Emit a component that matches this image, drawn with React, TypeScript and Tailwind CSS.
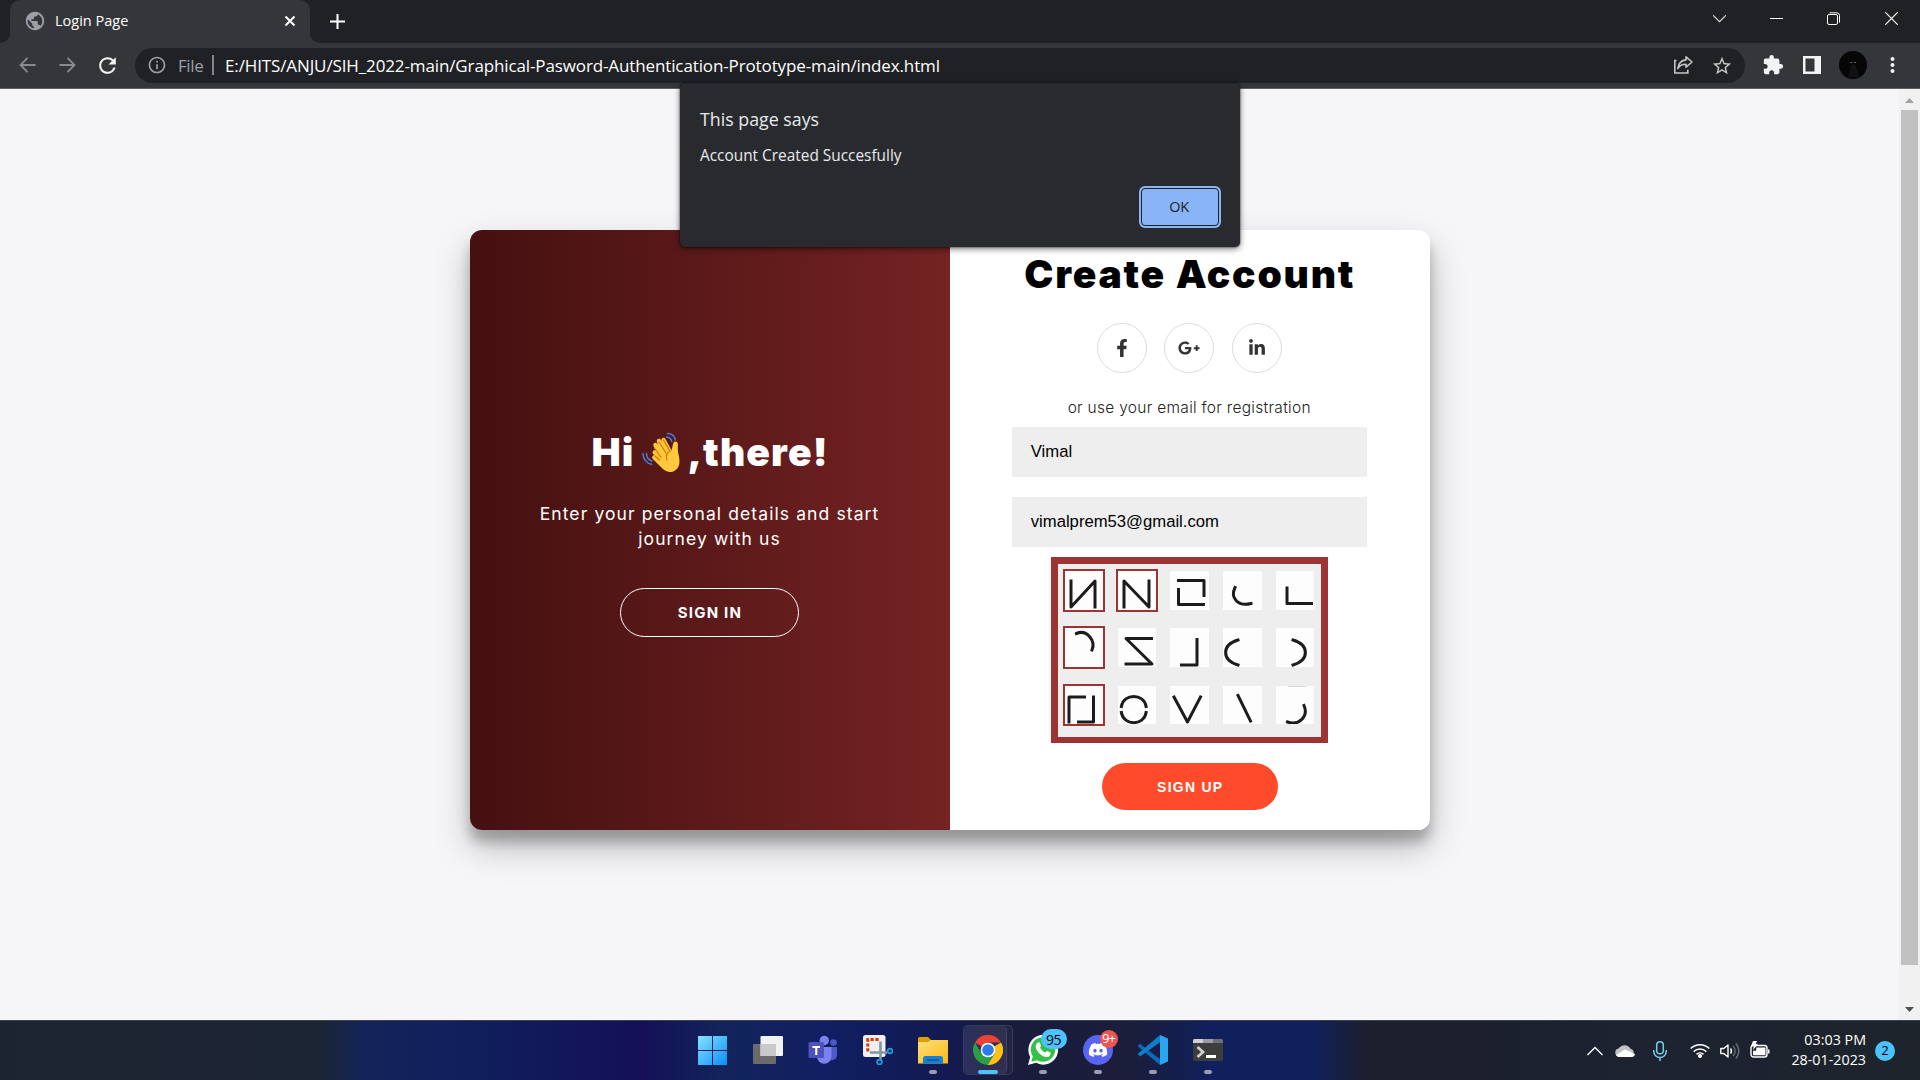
import type { ReactNode } from "react";
import { FaFacebookF, FaGooglePlusG, FaLinkedinIn, FaDiscord } from "react-icons/fa";
import { MdPublic, MdRefresh, MdStarBorder, MdExtension, MdInfoOutline } from "react-icons/md";

function TabStrip() {
  return (
    <div className="flex h-[43px] shrink-0 items-stretch bg-[#202124] text-white">
      <svg className="h-[43px] w-[10px]" viewBox="0 0 10 43">
        <path d="M0 43 A10 10 0 0 0 10 33 V43 Z" fill="#35363a" />
      </svg>
      <div className="flex w-[300px] items-center rounded-t-[10px] bg-[#35363a] pl-[14px]">
        <MdPublic className="mb-[1px] size-[22px] text-[#9aa0a6]" />
        <span className="mb-[2px] ml-[9px] w-[230px] text-[14.5px] leading-[20px] whitespace-nowrap">Login Page</span>
        <svg className="mb-[1px] -ml-[1px] size-[12px]" viewBox="0 0 12 12" stroke="#fff" strokeWidth="2">
          <path d="M1.5 1.5l9 9M10.5 1.5l-9 9" />
        </svg>
      </div>
      <svg className="h-[43px] w-[10px]" viewBox="0 0 10 43">
        <path d="M10 43 A10 10 0 0 1 0 33 V43 Z" fill="#35363a" />
      </svg>
      <svg className="mt-[14px] ml-[10px] size-[15px]" viewBox="0 0 15 15" stroke="#fff" strokeWidth="2">
        <path d="M7.5 0v15M0 7.5h15" />
      </svg>
      <div className="mr-[22px] ml-auto flex items-start pt-[12px]">
        <svg className="mr-[44px] h-[13px] w-[13px]" viewBox="0 0 13 13" fill="none" stroke="#dcdcdc" strokeWidth="1.1">
          <path d="M0 3.2l6.5 6.5L13 3.2" />
        </svg>
        <svg className="mr-[44px] h-[13px] w-[13px]" viewBox="0 0 13 13">
          <path d="M0 6h13v1H0z" fill="#fff" />
        </svg>
        <svg className="mr-[45px] h-[13px] w-[13px]" viewBox="0 0 13 13" fill="none" stroke="#fff">
          <rect x=".5" y="2.5" width="10" height="10" rx="1.5" />
          <path d="M2.5 .8h7.2a2.8 2.8 0 0 1 2.8 2.8v7" />
        </svg>
        <svg className="h-[13px] w-[13px]" viewBox="0 0 13 13" stroke="#fff" strokeWidth="1.2">
          <path d="M.3 .3l12.4 12.4M12.7 .3L.3 12.7" />
        </svg>
      </div>
    </div>
  );
}

function Toolbar() {
  return (
    <div className="flex h-[46px] shrink-0 items-center border-b border-[#5f6065] bg-[#35363a] pb-[1px] pl-[19px]">
      <svg className="h-[16px] w-[17px]" viewBox="0 0 17 16" fill="none" stroke="#8a8b8e" strokeWidth="1.8">
        <path d="M8.5 .8L1.5 8l7 7.2M1.5 8H16.5" />
      </svg>
      <svg className="ml-[23px] h-[16px] w-[17px]" viewBox="0 0 17 16" fill="none" stroke="#8a8b8e" strokeWidth="1.8">
        <path d="M8.5 .8l7 7.2-7 7.2M15.5 8H.5" />
      </svg>
      <MdRefresh className="ml-[19px] size-[25px] text-[#f1f3f4]" />
      <div className="ml-[15px] flex h-[35px] w-[1610px] items-center rounded-full bg-[#202124] pl-[12px]">
        <MdInfoOutline className="size-[20px] text-[#9aa0a6]" />
        <span className="ml-[11px] w-[34px] pt-[1px] text-[17px] leading-[24px] tracking-[-.4px] whitespace-nowrap text-[#9aa0a6]">File</span>
        <span className="h-[20px] w-[2px] bg-[#80868b]" />
        <span className="ml-[11px] pt-[1px] text-[17px] leading-[24px] tracking-[-.122px] whitespace-nowrap text-white">
          E:/HITS/ANJU/SIH_2022-main/Graphical-Pasword-Authentication-Prototype-main/index.html
        </span>
        <svg className="mr-[17px] ml-auto h-[20px] w-[21px]" viewBox="0 0 21 20" fill="none" stroke="#c4c6c8" strokeWidth="1.6">
          <path d="M3.5 5.5H1.8V18h13v-3.2" />
          <path d="M13 1.8l6 5.2-6 5.2V9.3C9 9.2 6.500 10.500 4.800 13.500 5.500 8.600 8.500 5.300 13 4.900z" strokeLinejoin="round" />
        </svg>
        <MdStarBorder className="mt-[1px] mr-[12px] size-[22px] text-[#c4c6c8]" />
      </div>
      <MdExtension className="ml-[17px] size-[22px] text-[#f1f3f4]" />
      <svg className="ml-[19px] size-[18px]" viewBox="0 0 18 18">
        <path d="M0 0h18v18H0z M2.500 2.500v13h9v-13z" fill="#f1f3f4" fillRule="evenodd" />
      </svg>
      <svg className="ml-[18px] size-[28px]" viewBox="0 0 28 28">
        <circle cx="14" cy="14" r="14" fill="#060606" />
        <path d="M9 26c1-5 2-7 3-10 0-4 4-4 5 0 1 3 3 5 3 10z" fill="#121212" />
        <path d="M11.500 11.500h2M15 11.500h2" stroke="#777" strokeWidth=".9" />
      </svg>
      <svg className="ml-[23px] h-[18px] w-[5px]" viewBox="0 0 5 18" fill="#f1f3f4">
        <circle cx="2.500" cy="3" r="2" /><circle cx="2.500" cy="9" r="2" /><circle cx="2.500" cy="15" r="2" />
      </svg>
    </div>
  );
}

function WavingHand() {
  return (
    <svg className="size-[41px]" viewBox="0 0 41 41" fill="none">
      <path d="M10 22c-1.500-3 1-4.500 2.500-3.500L10.500 14c-1-3 2.500-4.500 4-2l1 2-1.500-4c-1-3 2.600-4.600 4.100-1.800l1.500 3-1-2.500c-1-3 2.700-4.300 4-1.500l6 11.300 1.400-6.500c.7-4 5-3 4.900.2-.100 3-.300 4.800.5 9.800C37.800 31 36 36 32 38.500c-4.500 2.800-9 1.500-12.500-2L9.800 27c-2-2.400 1-5 3-3.600z" transform="translate(1 0)" fill="#ffc83d" />
      <path d="M13 24l4.500 4M12.500 16l6.500 9.500M17 10l7 11M21.500 8l6 10.500M28.500 19c-4 2-5 5-3.500 9" stroke="#d67d00" strokeWidth="1.300" strokeLinecap="round" />
      <path d="M25.500 1.500c4 0 7 2.500 7.800 6.500M24.500 5c2.800.2 4.700 1.800 5.300 4.500M1 21.500c0 5.500 3.500 10 8.800 10.800M4.500 21.500c0 3.500 2.200 6.500 5.500 7.500" stroke="#4287e8" strokeWidth="1.400" strokeLinecap="round" />
    </svg>
  );
}

function WelcomePanel() {
  return (
    <div className="flex w-[480px] flex-col items-center bg-linear-to-r from-[#451010] to-[#752323] pt-[200px] pr-[1px] text-white">
      <h1 className="flex h-[44px] items-center text-[39px] leading-[44px] font-black tracking-[1.100px] whitespace-pre">
        <span>Hi</span>
        <span className="mr-[4px] ml-[8px]"><WavingHand /></span>
        <span className="-mr-[1px]">,there!</span>
      </h1>
      <p className="mt-[27px] text-center text-[17.500px] leading-[25px] tracking-[1.100px] whitespace-nowrap">
        Enter your personal details and start
        <br />
        journey with us
      </p>
      <button className="mt-[37px] h-[49px] w-[179px] rounded-full border border-white pt-[1px] pl-[1px] text-[15px] font-bold tracking-[1.200px]">
        SIGN IN
      </button>
    </div>
  );
}

type Glyph = { d: string; picked?: boolean };

const glyphs: Glyph[] = [
  { d: "M6 10V36L30 10V36", picked: true },
  { d: "M6 36V10L31 36V10", picked: true },
  { d: "M8.500 9.500H34V24.500M8.500 18.500V33.500H33.500" },
  { d: "M12 16.500C7 27 15 36 28 32.500" },
  { d: "M11 17V32.500H35.500" },
  { d: "M11.500 5.500C22 1 31 13 27 22", picked: true },
  { d: "M33.500 10.500H8L34 36H8" },
  { d: "M27 11.500V37H11.500" },
  { d: "M15 12C-1.500 17-1.500 32 15 37" },
  { d: "M17 12C33.500 17 33.500 32 17 37" },
  { d: "M19.500 12H4V37M28.500 12V37H13.500", picked: true },
  { d: "M3.400 21.500C5.500 8 26 8 28.100 21.500M3.400 27.500C5.500 41 26 41 28.100 27.500" },
  { d: "M4 12L17.500 37 30.500 12" },
  { d: "M15 10.500L27.500 36" },
  { d: "M28 20.500C33 32 22 41 11.500 37" },
];

function PasswordTile({ glyph, last }: { glyph: Glyph; last: boolean }) {
  return (
    <div className={glyph.picked ? "h-[38.500px] overflow-hidden bg-[#fdfdfd] outline-2 outline-[#9e3333]" : "h-[38.500px] overflow-hidden bg-[#fdfdfd]"}>
      <svg className="-mt-[.500px] size-[39px]" viewBox="0 0 39 39" fill="none" stroke="#1c1c1c" strokeWidth="3">
        <path d={glyph.d} strokeLinecap="square" strokeLinejoin="round" />
        {last && <path d="M12 .8H30" stroke="#888" strokeWidth="1" />}
      </svg>
    </div>
  );
}

function SignUpForm() {
  return (
    <div className="flex w-[480px] flex-col items-center bg-white pt-[21px] pr-[1.500px]">
      <h1 className="h-[47px] pl-[1px] text-[39px] leading-[46px] font-black tracking-[1.800px] whitespace-nowrap text-black">
        Create Account
      </h1>
      <div className="mt-[25px] flex gap-[17.500px] text-[#333]">
        <a className="flex size-[50px] items-center justify-center rounded-full border border-[#ddd]"><FaFacebookF className="size-[18px]" /></a>
        <a className="flex size-[50px] items-center justify-center rounded-full border border-[#ddd]"><FaGooglePlusG className="size-[22px]" /></a>
        <a className="flex size-[50px] items-center justify-center rounded-full border border-[#ddd]"><FaLinkedinIn className="size-[18px]" /></a>
      </div>
      <span className="mt-[24px] h-[30px] text-[15.500px] leading-[22px] font-light tracking-[.290px] whitespace-nowrap text-[#222]">
        or use your email for registration
      </span>
      <div className="h-[50px] w-[355px] bg-[#eee] pl-[19px] font-['Liberation_Sans',Arial,sans-serif] text-[16.670px] leading-[49px] text-black">Vimal</div>
      <div className="mt-[20px] h-[50px] w-[355px] bg-[#eee] pl-[19px] font-['Liberation_Sans',Arial,sans-serif] text-[16.670px] leading-[49px] text-black">vimalprem53@gmail.com</div>
      <div className="mt-[10px] h-[186px] w-[277px] border-[7px] border-b-[6px] border-[#9e3333] bg-[#eee] pt-[7px] pl-[7px]">
        <div className="grid grid-cols-[repeat(5,38.500px)] gap-x-[14.250px] gap-y-[18.900px]">
          {glyphs.map((g, i) => <PasswordTile key={g.d} glyph={g} last={i === 14} />)}
        </div>
      </div>
      <button className="mt-[20px] ml-[1px] h-[47px] w-[176px] rounded-full bg-[#ff4b2b] pt-[1px] pl-[1px] font-['Liberation_Sans',Arial,sans-serif] text-[14px] font-bold tracking-[1.250px] text-white">
        SIGN UP
      </button>
    </div>
  );
}

function Scrollbar() {
  return (
    <div className="flex w-[21px] flex-col items-center bg-[#f1f1f1]">
      <svg className="h-[21px] w-[21px]" viewBox="0 0 21 21"><path d="M6 14L10.500 9 15 14z" fill="#a3a3a3" /></svg>
      <div className="h-[855px] w-[17px] bg-[#c1c1c1]" />
      <svg className="mt-auto h-[21px] w-[21px]" viewBox="0 0 21 21"><path d="M6 8L10.500 13 15 8z" fill="#505050" /></svg>
    </div>
  );
}

function AlertDialog() {
  return (
    <div className="absolute top-[83px] left-[680px] h-[164px] w-[560px] rounded-[5px] bg-[#292a2d] pt-[23px] pl-[20px] font-['Open_Sans','Noto_Sans',sans-serif] text-[#e8eaed] shadow-[0_2px_6px_rgba(0,0,0,.5),0_0_2px_rgba(0,0,0,.8)]">
      <h2 className="text-[17.800px] leading-[26px] whitespace-nowrap">This page says</h2>
      <p className="mt-[14px] text-[15.400px] leading-[20px] whitespace-nowrap">Account Created Succesfully</p>
      <button className="mt-[20px] ml-[439px] flex h-[42px] w-[82px] rounded-[6px] bg-[#8ab4f8] p-[2px]">
        <span className="flex flex-1 items-center justify-center rounded-[4px] border border-[#202124] pr-[2px] text-[14.500px] tracking-[-.300px] text-[#202124]">OK</span>
      </button>
    </div>
  );
}

function TaskIcon({ children, running }: { children: ReactNode; running?: boolean }) {
  return (
    <div className="flex w-[55px] flex-col items-center pt-[14px]">
      <div className="relative size-[30px]">{children}</div>
      {running && <span className="mt-[5px] h-[4px] w-[8px] rounded-full bg-[#9a9db0]" />}
    </div>
  );
}

function TaskbarApps() {
  return (
    <div className="flex">
      <TaskIcon>
        <svg viewBox="0 0 30 30">
          <defs><linearGradient id="win" x1="0" y1="0" x2="1" y2="1"><stop stopColor="#86e3ff" /><stop offset="1" stopColor="#0a8df6" /></linearGradient></defs>
          <path d="M0 1h14v14H0zM15 1h14v14H15zM0 16h14v14H0zM15 16h14v14H15z" fill="url(#win)" />
        </svg>
      </TaskIcon>
      <TaskIcon>
        <svg viewBox="0 0 30 30">
          <rect x="0" y="9" width="23" height="20" rx="1" fill="#6b6b6b" />
          <rect x="7.500" y="1" width="22.500" height="20" rx="1" fill="#f2f2f2" />
          <path d="M7.500 9H23v12H7.500z" fill="#c9c9c9" />
        </svg>
      </TaskIcon>
      <TaskIcon>
        <svg viewBox="0 0 30 30">
          <circle cx="25.500" cy="7.500" r="3.300" fill="#5059c9" />
          <path d="M19 12h10v8a5.500 5.500 0 0 1-10 3z" fill="#5059c9" />
          <circle cx="16.300" cy="5.500" r="4.700" fill="#7b83eb" />
          <path d="M9 12h14.500v9.500a7 7 0 0 1-14.500 0z" fill="#7b83eb" />
          <rect x="0.500" y="7" width="15.500" height="16" rx="1.500" fill="#4b53bc" />
          <path d="M4.500 11h7.500v2H9.300v7H7.200v-7H4.500z" fill="#fff" />
        </svg>
      </TaskIcon>
      <TaskIcon>
        <svg viewBox="0 0 30 30" fill="none">
          <rect x="0" y="0" width="22.500" height="22" rx="2.500" fill="#eef0f3" />
          <path d="M4.800 16.500V4.500H16.500" stroke="#d83b01" strokeWidth="3" strokeDasharray="3.200 1.700" />
          <path d="M7 17.500h17M17.500 6.500V25" stroke="#8a949c" strokeWidth="2.600" />
          <circle cx="27" cy="16" r="2.400" stroke="#1a9fe8" strokeWidth="1.700" />
          <circle cx="16.500" cy="27" r="2.400" stroke="#1a9fe8" strokeWidth="1.700" />
        </svg>
      </TaskIcon>
      <TaskIcon running>
        <svg viewBox="0 0 30 30">
          <defs><linearGradient id="fold" x1="0" y1="0" x2="1" y2="1"><stop stopColor="#ffe07a" /><stop offset="1" stopColor="#fbb914" /></linearGradient></defs>
          <path d="M0 3.500A1.500 1.500 0 0 1 1.500 2H10l3 3h16v5H0z" fill="#e0a100" />
          <path d="M0 7h10l3-2h17v23.500H0z" fill="url(#fold)" />
          <path d="M5 28.500v-5A2.500 2.500 0 0 1 7.500 21h15a2.500 2.500 0 0 1 2.500 2.500v5z" fill="#1481d4" />
          <path d="M9 25h12" stroke="#0b5394" strokeWidth="1.300" />
        </svg>
      </TaskIcon>
      <div className="flex w-[55px] pt-[4px] pl-[3px]">
        <div className="flex h-[50px] w-[50px] rounded-[5px] border border-white/10 bg-white/[.04]">
          <div className="flex h-[48px] w-[43px] flex-col items-center rounded-[5px] border-r border-white/10 bg-white/[.06] pt-[9px]">
            <svg className="ml-[6px] size-[30px] shrink-0" viewBox="0 0 30 30">
              <path d="M15 15L2 7.500A15 15 0 0 1 28 7.500H15z" fill="#ea4335" />
              <path d="M15 15L28 7.500A15 15 0 0 1 14.500 30L21.500 18.700z" fill="#fbc116" />
              <path d="M2 7.500A15 15 0 0 0 14.500 30L21 19 8.500 18.800z" fill="#2c9f46" />
              <circle cx="15" cy="15" r="7.300" fill="#fff" /><circle cx="15" cy="15" r="5.800" fill="#2a7de9" />
            </svg>
            <span className="mt-[5px] ml-[6px] h-[4px] w-[20px] shrink-0 rounded-full bg-[#4cc2ff]" />
          </div>
        </div>
      </div>
      <TaskIcon running>
        <svg viewBox="0 0 30 30">
          <path d="M0 30l2.200-8A14.900 14.900 0 1 1 8 27.800z" fill="#fff" />
          <path d="M3.300 26.700l1.500-5.400A12.300 12.300 0 1 1 9 25.200z" fill="#35c048" />
          <path d="M10 7.500c.8-.4 1.700-.3 2 .4l1 2.500c.2.600-.100 1.100-1 2 1.300 2.500 3 4 5.600 5.200.9-1.100 1.300-1.700 2-1.400l2.700 1.400c.8.500.1 3-1.300 3.900C16 24.500 6.500 15.500 7.800 10.500c.4-1.300 1.200-2.500 2.200-3z" fill="#fff" />
        </svg>
        <span className="absolute -top-[6px] left-[13px] flex h-[20px] w-[26px] items-center justify-center rounded-full bg-[#4cc2ff] text-[14px] tracking-[-.4px] text-black">95</span>
      </TaskIcon>
      <TaskIcon running>
        <span className="flex size-[30px] items-center justify-center rounded-full bg-[#5865f2] text-white"><FaDiscord className="size-[20px]" /></span>
        <span className="absolute -top-[5px] left-[17px] flex size-[18px] items-center justify-center rounded-full bg-[#f05350] text-[13px] tracking-[-1px] text-white">9+</span>
      </TaskIcon>
      <TaskIcon running>
        <svg viewBox="0 0 30 30">
          <path d="M0 10.500l2-1.800 20 15.500V30L0.200 11.700z" fill="#0b6cb5" />
          <path d="M0.200 19.500v-1L22 0v7.300L2.200 21.500z" fill="#0f7dc7" />
          <path d="M22 0l8 3.500v23L22 30z" fill="#2aa5f2" />
        </svg>
      </TaskIcon>
      <TaskIcon running>
        <svg viewBox="0 0 30 30">
          <rect x="0" y="4" width="30" height="22" rx="1.500" fill="#3d3d3d" />
          <path d="M0 8V5.500A1.500 1.500 0 0 1 1.500 4H10v4z" fill="#d0d0d6" /><path d="M10 4h10v4H10z" fill="#9c9ca4" /><path d="M20 4h8.500A1.500 1.500 0 0 1 30 5.500V8H20z" fill="#6f6f78" />
          <path d="M4.500 12l5.500 5-5.500 5" fill="none" stroke="#cfcfcf" strokeWidth="2.800" />
          <path d="M13 20h10v3H13z" fill="#fff" />
        </svg>
      </TaskIcon>
    </div>
  );
}

function Tray() {
  return (
    <div className="ml-auto flex items-center pr-[25px] text-white">
      <svg className="h-[10px] w-[16px]" viewBox="0 0 16 10" fill="none" stroke="#fff" strokeWidth="1.300"><path d="M.5 9L8 1.500 15.500 9" /></svg>
      <svg className="ml-[12px] h-[13px] w-[20px]" viewBox="0 0 20 13">
        <path d="M4 12.500A4 4 0 0 1 3.500 4.600 7 7 0 0 1 15.500 4.800 4 4 0 0 1 16 12.500z" fill="#c2c2c4" />
        <path d="M1 11l9-5.500L20 10a3.500 3.500 0 0 1-3.500 3H4a4 4 0 0 1-3-2z" fill="#fff" />
      </svg>
      <svg className="ml-[18px] h-[20px] w-[14px]" viewBox="0 0 14 20" fill="none" stroke="#76cfe6" strokeWidth="1.500">
        <rect x="3.700" y=".8" width="6.600" height="12" rx="3.300" /><path d="M.8 9v1.500a6.200 6 0 0 0 12.400 0V9M7 16.500V20" />
      </svg>
      <svg className="ml-[23px] h-[15px] w-[20px]" viewBox="0 0 20 15" fill="none" stroke="#fff" strokeWidth="1.500">
        <path d="M.7 5.500a13.200 13.200 0 0 1 18.600 0M3.700 8.600a9 9 0 0 1 12.600 0M6.500 11.400a5 5 0 0 1 7 0" /><circle cx="10" cy="13" r="1.300" fill="#fff" />
      </svg>
      <svg className="ml-[10px] h-[18px] w-[20px]" viewBox="0 0 20 18" fill="none" stroke="#fff" strokeWidth="1.400">
        <path d="M.8 6.500v5h3L8 15V3L3.800 6.500z" strokeLinejoin="round" /><path d="M10.500 6.500a4 4 0 0 1 0 5" />
        <path d="M13 4a7 7 0 0 1 0 10M15.800 1.500a11 11 0 0 1 0 15" stroke="#666c76" />
      </svg>
      <svg className="ml-[10px] mb-[3px] h-[17px] w-[20px]" viewBox="0 0 20 17">
        <rect x="1" y="4.500" width="16" height="11.500" rx="2.500" fill="none" stroke="#fff" strokeWidth="1.400" />
        <path d="M6.500 6.500H15.500v7.700H3v-4.500h3zM18 8.500h1.500v4H18zM3 0h4L5.700 3H8L3 9l.8-4H1z" fill="#fff" />
      </svg>
      <div className="-mr-[1px] mb-[2px] ml-[21px] w-[75px] text-right text-[14.300px] leading-[20px] whitespace-nowrap">
        <div>03:03 PM</div>
        <div>28-01-2023</div>
      </div>
      <span className="ml-[10px] flex size-[20px] items-center justify-center rounded-full bg-[#4cc2ff] text-[13px] text-black">2</span>
    </div>
  );
}

export default function App() {
  return (
    <div className="relative flex h-[1080px] w-[1920px] flex-col overflow-hidden font-['Open_Sans','Noto_Sans',sans-serif]">
      <TabStrip />
      <Toolbar />
      <main className="flex h-[931px] bg-[#f6f5f7]">
        <div className="flex flex-1 flex-col pt-[141px] pl-[470px] font-['Inter',sans-serif]">
          <div className="flex h-[600px] w-[960px] overflow-hidden rounded-[12px] shadow-[0_17px_35px_rgba(0,0,0,.25),0_12px_12px_rgba(0,0,0,.22)]">
            <WelcomePanel />
            <SignUpForm />
          </div>
        </div>
        <Scrollbar />
      </main>
      <footer className="flex h-[60px] border-t border-[#3b4450] bg-[linear-gradient(90deg,#1d2431_0px,#1c2534_320px,#12245a_365px,#101f5c_480px,#140f58_640px,#12245a_720px,#101f62_830px,#131a50_950px,#1a1c3e_1000px,#1b1d3a_1130px,#10205c_1210px,#10205c_1310px,#1d1f2c_1370px,#1c2230_1600px,#1e242c_1920px)] pl-[685px]">
        <TaskbarApps />
        <Tray />
      </footer>
      <AlertDialog />
    </div>
  );
}
